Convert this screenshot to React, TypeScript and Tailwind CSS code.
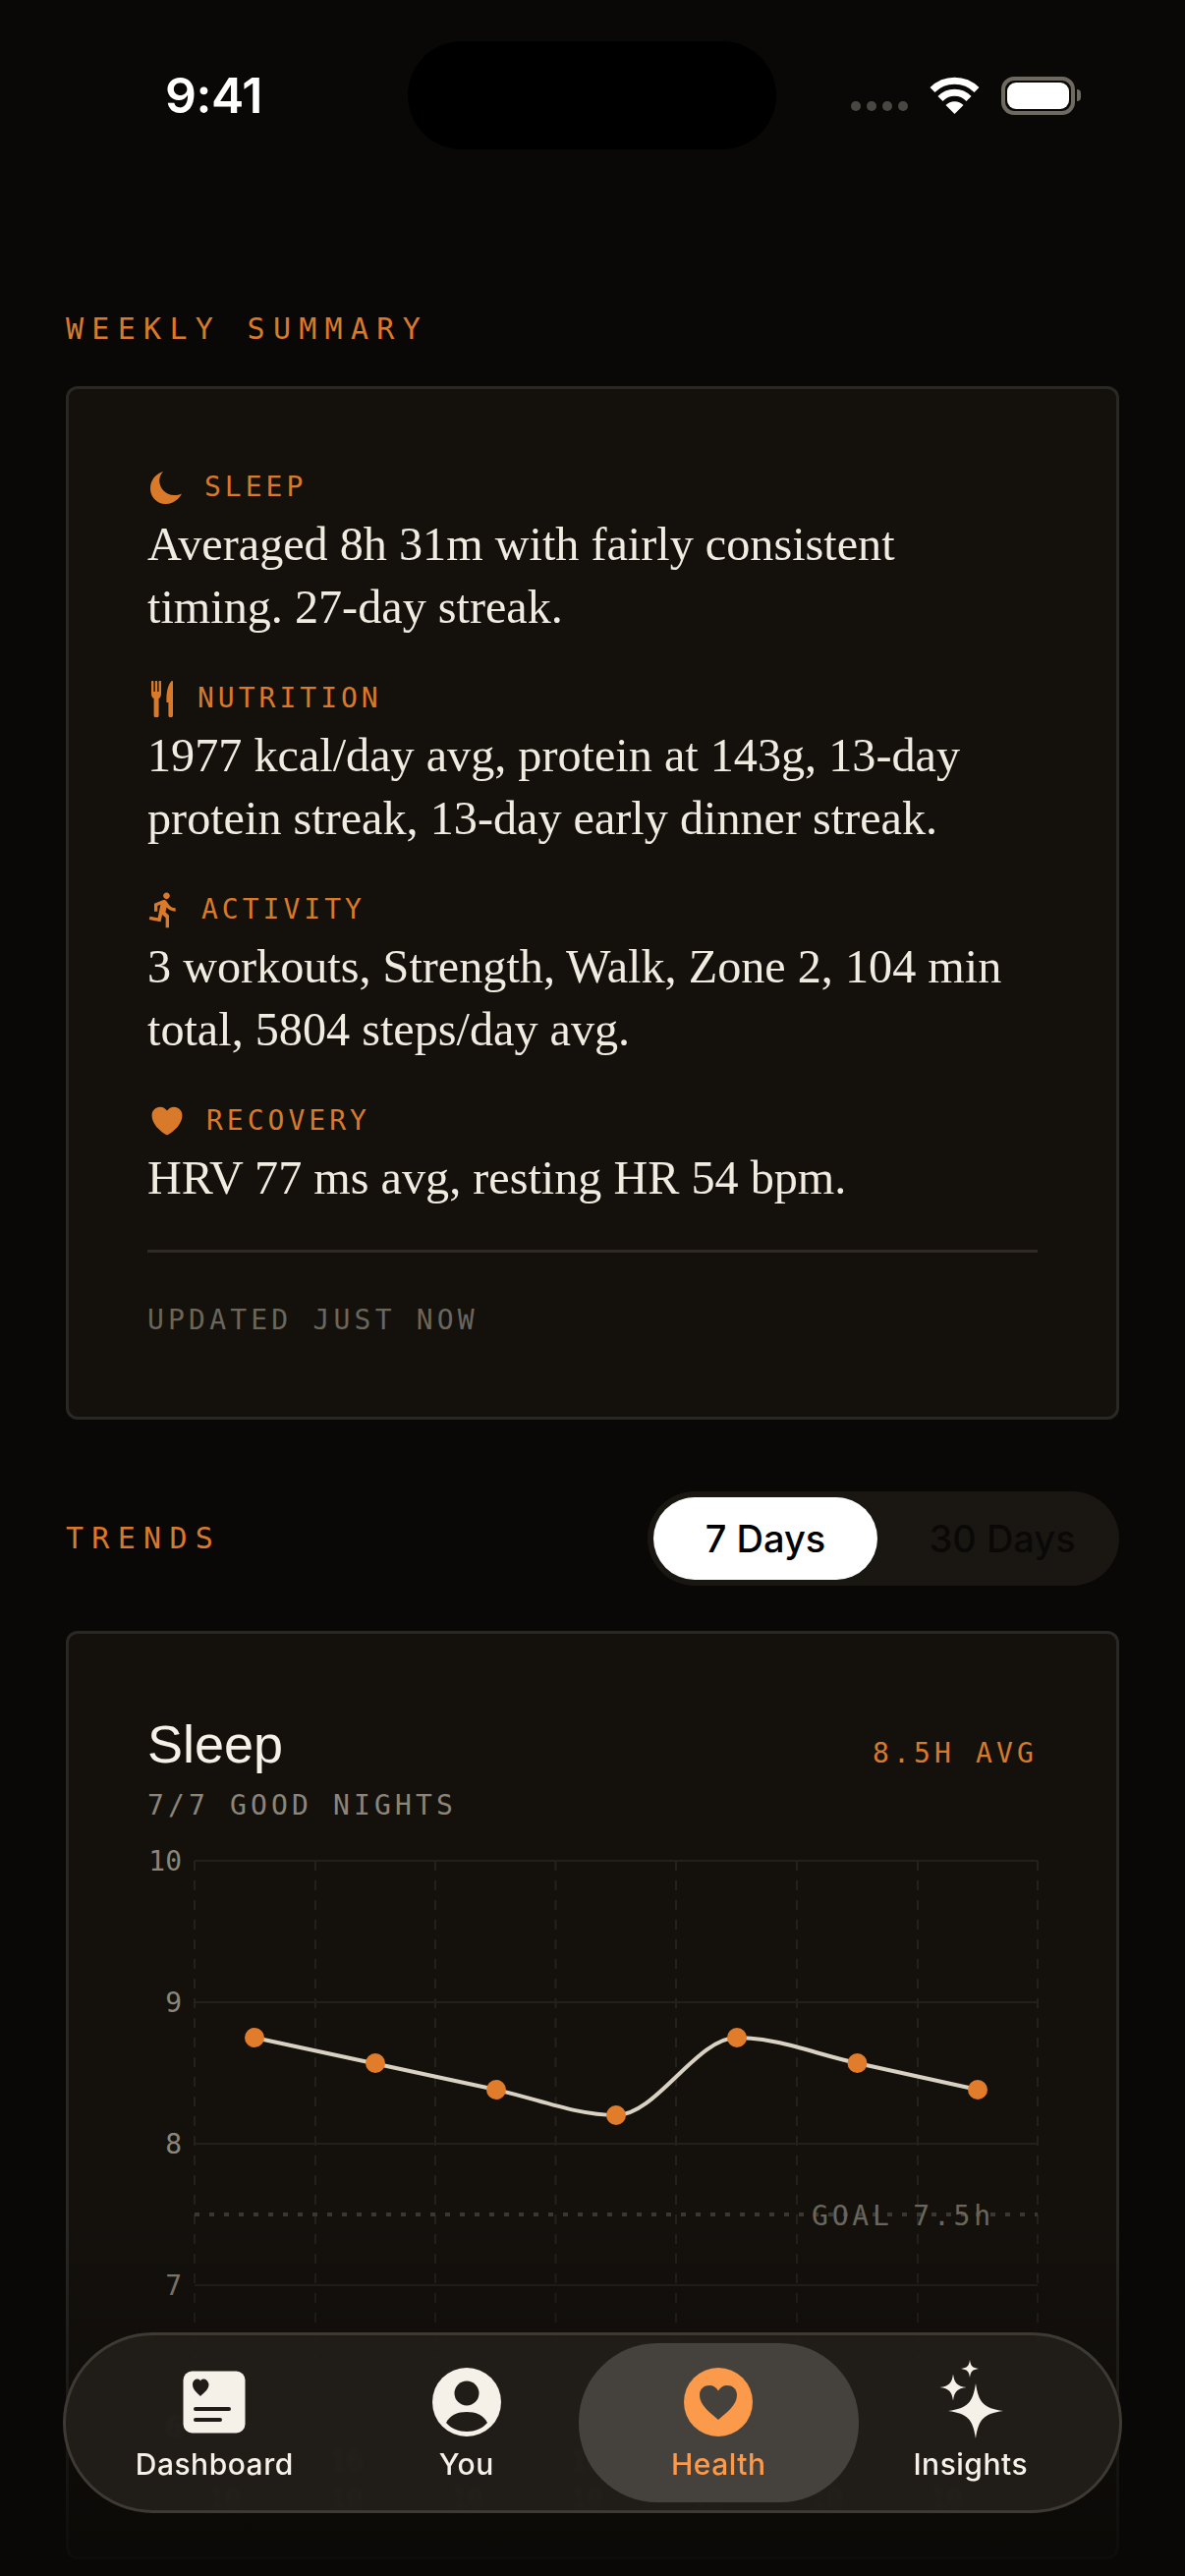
import React from "react";
import { IoHeart } from "react-icons/io5";
import { MdDirectionsRun } from "react-icons/md";

const mono = "font-['DejaVu_Sans_Mono',monospace]";
const sans = "font-['Inter',sans-serif]";
const svgMono = "DejaVu Sans Mono, monospace";

function Wifi() {
  return (
    <svg width="51" height="38" viewBox="0 0 51 38" fill="none">
      <path d="M3 13.5 A32 32 0 0 1 48 13.5" stroke="#fff" strokeWidth="7" />
      <path d="M11 22.5 A20 20 0 0 1 40 22.5" stroke="#fff" strokeWidth="7" />
      <path d="M25.5 38 L16.5 29 A12.5 12.5 0 0 1 34.5 29 Z" fill="#fff" />
    </svg>
  );
}

function Moon() {
  return (
    <svg width="32" height="33" viewBox="0 0 33 33" fill="currentColor" className="ml-[3px]" preserveAspectRatio="none">
      <path d="M13.5 0 C5.5 2 0 9 0 17 C0 26 7 33 16 33 C23 33 29.5 29 33 22.5 C30.5 23.5 28 24 25 24 C16 24 9.5 17 9.5 9 C9.5 6 11 2.5 13.5 0 Z" />
    </svg>
  );
}

function ForkKnife() {
  return (
    <svg width="22" height="37" viewBox="0 0 22 37" fill="currentColor" className="mr-[2px] ml-[4px]">
      <path d="M0 1 a1 1 0 0 1 2.4 0 V11 H3.8 V1 a1 1 0 0 1 2.4 0 V11 H7.6 V1 a1 1 0 0 1 2.4 0 V13 C10 16 8.6 17.5 7.6 18 V35 a2 2 0 0 1 -5 0 V18 C1.4 17.5 0 16 0 13 Z" />
      <path d="M22 0.5 V35 a2.2 2.2 0 0 1 -4.6 0 V22 H15.5 C15 14 16.5 4 20.5 0.3 C21.2 -0.2 22 0 22 0.5 Z" />
    </svg>
  );
}

function StatusBar() {
  return (
    <div className="relative mt-[42px] flex h-[110px] items-center pl-[168px] pr-[106px]">
      <span className={`${sans} w-[247px] shrink-0 text-[50px] leading-none font-semibold tracking-[-0.5px] text-white`}>9:41</span>
      <div className="h-[110px] w-[375px] shrink-0 rounded-[55px] bg-black" />
      <div className="ml-auto flex items-center">
        <div className="mt-[22px] flex gap-[6px]">
          <div className="h-[10px] w-[10px] rounded-full bg-[#4a4743]" />
          <div className="h-[10px] w-[10px] rounded-full bg-[#4a4743]" />
          <div className="h-[10px] w-[10px] rounded-full bg-[#4a4743]" />
          <div className="h-[10px] w-[10px] rounded-full bg-[#4a4743]" />
        </div>
        <div className="ml-[22px]"><Wifi /></div>
        <div className="ml-[22px] flex items-center">
          <div className="h-[39px] w-[75px] rounded-[13px] border-[4px] border-[#6f6a60] p-[2px]">
            <div className="h-full w-full rounded-[9px] bg-white" />
          </div>
          <div className="ml-[2px] h-[12px] w-[4px] rounded-r-full bg-[#6f6a60]" />
        </div>
      </div>
    </div>
  );
}

function Section({ icon, label, lines }: { icon: React.ReactNode; label: string; lines: string[] }) {
  return (
    <div>
      <div className="flex h-[36px] items-center gap-[23px] text-[#d97a2b]">
        {icon}
        <span className={`${mono} text-[28px] leading-[36px] tracking-[4px]`}>{label}</span>
      </div>
      <p className="mt-[8px] font-['Liberation_Serif',serif] text-[48.2px] leading-[64px] text-[#f1ece1]">
        {lines.map((l) => (
          <span key={l} className="block whitespace-nowrap">{l}</span>
        ))}
      </p>
    </div>
  );
}

function Chart() {
  const vx = [48, 171, 293, 415.5, 538, 661, 784, 906];
  const hy = [24, 168, 312, 456, 600];
  const pts: [number, number][] = [
    [109, 204],
    [232, 230],
    [355, 257],
    [477, 283],
    [600, 204],
    [722.5, 230],
    [845, 257],
  ];
  const gx = [78, 202, 325, 447, 570, 691, 813];
  return (
    <svg width="912" height="720" viewBox="0 0 912 720" className="mt-[14px] block" fill="none">
      {vx.map((x) => (
        <line key={x} x1={x} x2={x} y1={24} y2={600} stroke="#24211d" strokeWidth="2" strokeDasharray="10 10" />
      ))}
      {hy.map((y) => (
        <line key={y} x1={48} x2={906} y1={y} y2={y} stroke="#23201c" strokeWidth="2" />
      ))}
      <line x1={48} x2={906} y1={384} y2={384} stroke="#3a3731" strokeWidth="4" strokeDasharray="5 10" />
      {[["10", 24], ["9", 168], ["8", 312], ["7", 456], ["6", 600]].map(([t, y]) => (
        <text key={t} x={35} y={(y as number) + 10} textAnchor="end" fontFamily={svgMono} fontSize="28" fill="#8b857a">
          {t}
        </text>
      ))}
      <text x={676} y={395} fontFamily={svgMono} fontSize="28" letterSpacing="3.8" fill="#6b665c">GOAL 7.5h</text>
      <path
        d="M109 204 L355 257 C396 266 436 283 477 283 C518 283 559 204 600 204 C641 204 681 221 722.5 230 L845 257"
        stroke="#d9d2c3"
        strokeWidth="4"
      />
      {pts.map(([x, y]) => (
        <circle key={x} cx={x} cy={y} r="10" fill="#e07c2a" />
      ))}
      <text x={202} y={645} textAnchor="middle" fontFamily={svgMono} fontSize="28" fill="#8b857a">16</text>
      <text x={447} y={645} textAnchor="middle" fontFamily={svgMono} fontSize="28" fill="#8b857a">18</text>
      {gx.map((x) => (
        <text key={x} x={x} y={683} textAnchor="middle" fontFamily={svgMono} fontSize="28" fill="#8b857a">10</text>
      ))}
    </svg>
  );
}

function DashboardIcon() {
  return (
    <svg width="70" height="70" viewBox="0 0 70 70">
      <rect x="3.5" y="3.5" width="63" height="63" rx="9" fill="#f5f1e8" />
      <path d="M21 29 C17 25 13 22 13 17 C13 13.5 15.5 11.5 18 11.5 C19.5 11.5 20.5 12.3 21 13.5 C21.5 12.3 22.5 11.5 24 11.5 C26.5 11.5 29 13.5 29.5 17 C29.5 22 25 25 21 29 Z" fill="#201d19" />
      <rect x="14" y="40" width="38" height="4" rx="2" fill="#201d19" />
      <rect x="14" y="51" width="29" height="4" rx="2" fill="#201d19" />
    </svg>
  );
}

function YouIcon() {
  return (
    <svg width="70" height="70" viewBox="0 0 70 70">
      <circle cx="35" cy="35" r="35" fill="#f5f1e8" />
      <circle cx="35" cy="26" r="12.5" fill="#201d19" />
      <path d="M14 56 C18 48 26 45 35 45 C44 45 52 48 56 56 C51 62 43 65 35 65 C27 65 19 62 14 56 Z" fill="#201d19" />
    </svg>
  );
}

function HealthIcon() {
  return (
    <svg width="70" height="70" viewBox="0 0 70 70">
      <circle cx="35" cy="35" r="35" fill="#fb9a4a" />
      <path d="M35 53 C27 46 16 38 16 28 C16 21 21 18 26 18 C30 18 33 20 35 23.5 C37 20 40 18 44 18 C49 18 54 21 54 28 C54 38 43 46 35 53 Z" fill="#45423d" />
    </svg>
  );
}

function SparklesIcon() {
  const star = (cx: number, cy: number, r: number) => {
    const k = r * 0.18;
    return `M${cx} ${cy - r} C${cx + k * 0.6} ${cy - k * 1.6} ${cx + k * 1.6} ${cy - k * 0.6} ${cx + r} ${cy} C${cx + k * 1.6} ${cy + k * 0.6} ${cx + k * 0.6} ${cy + k * 1.6} ${cx} ${cy + r} C${cx - k * 0.6} ${cy + k * 1.6} ${cx - k * 1.6} ${cy + k * 0.6} ${cx - r} ${cy} C${cx - k * 1.6} ${cy - k * 0.6} ${cx - k * 0.6} ${cy - k * 1.6} ${cx} ${cy - r} Z`;
  };
  return (
    <svg width="70" height="78" viewBox="0 0 70 78" className="translate-y-[1px] overflow-visible">
      <path d={star(40, 51, 28)} fill="#f5f1e8" />
      <path d={star(17, 27, 13.5)} fill="#f5f1e8" />
      <path d={star(34, 8, 9)} fill="#f5f1e8" />
    </svg>
  );
}

function NavItem({ icon, label, active }: { icon: React.ReactNode; label: string; active?: boolean }) {
  return (
    <div className="relative flex flex-col items-center">
      {active && <div className="absolute -inset-x-[14px] top-[8px] h-[162px] rounded-[80px] bg-[#45423d]" />}
      <div className="relative mt-[33px] flex h-[70px] items-end justify-center">{icon}</div>
      <span className={`${sans} relative mt-[10px] text-[30px] leading-[36px] font-medium tracking-[0.5px] ${active ? "text-[#fb9a4a]" : "text-[#f5f1e8]"}`}>
        {label}
      </span>
    </div>
  );
}

export default function App() {
  return (
    <div className="relative h-[2622px] w-[1206px] overflow-hidden bg-[#0a0806]">
      <StatusBar />
      <main className="px-[67px]">
        <h2 className={`${mono} mt-[165px] text-[30px] leading-[36px] font-normal tracking-[8.3px] text-[#d97a2b]`}>WEEKLY SUMMARY</h2>
        <section className="mt-[40px] h-[1052px] rounded-[12px] border-[3px] border-[#2a2824] bg-[#14110d] px-[80px] pt-[82px]">
          <div className="flex flex-col gap-[43px]">
            <Section icon={<Moon />} label="SLEEP" lines={["Averaged 8h 31m with fairly consistent", "timing. 27-day streak."]} />
            <Section icon={<ForkKnife />} label="NUTRITION" lines={["1977 kcal/day avg, protein at 143g, 13-day", "protein streak, 13-day early dinner streak."]} />
            <Section icon={<MdDirectionsRun className="-mr-[5px] -ml-[3px] h-[40px] w-[40px]" />} label="ACTIVITY" lines={["3 workouts, Strength, Walk, Zone 2, 104 min", "total, 5804 steps/day avg."]} />
            <Section icon={<IoHeart className="-mr-[2px] ml-[1px] h-[38px] w-[38px]" />} label="RECOVERY" lines={["HRV 77 ms avg, resting HR 54 bpm."]} />
          </div>
          <div className="mt-[41px] h-[3px] bg-[#2f2b24]" />
          <p className={`${mono} mt-[51px] text-[28px] leading-[36px] tracking-[4.2px] text-[#6b665c]`}>UPDATED JUST NOW</p>
        </section>

        <div className="mt-[73px] flex h-[96px] items-center justify-between">
          <h2 className={`${mono} text-[30px] leading-[36px] font-normal tracking-[8.3px] text-[#d97a2b]`}>TRENDS</h2>
          <div className={`${sans} flex h-[96px] w-[480px] items-center rounded-full bg-[#1a1713] p-[6px] text-[38px] font-medium`}>
            <div className="flex h-[84px] w-[228px] items-center justify-center rounded-full bg-white text-black">7 Days</div>
            <div className="flex h-[84px] flex-1 items-center justify-center pl-[14px] text-[#0b0907]">30 Days</div>
          </div>
        </div>

        <section className="mt-[46px] h-[945px] rounded-[12px] border-[3px] border-[#2a2824] bg-[#14110d] px-[80px] pt-[82px]">
          <div className="flex items-baseline justify-between">
            <h3 className="font-['Liberation_Sans',sans-serif] text-[54px] leading-[60px] font-normal text-[#f5f1e8]">Sleep</h3>
            <span className={`${mono} text-[28px] leading-[36px] tracking-[4.15px] text-[#d97a2b]`}>8.5H AVG</span>
          </div>
          <p className={`${mono} mt-[15px] text-[28px] leading-[36px] tracking-[4.15px] text-[#8b857a]`}>7/7 GOOD NIGHTS</p>
          <Chart />
        </section>
      </main>

      <div className="pointer-events-none absolute inset-x-0 bottom-0 h-[360px] bg-gradient-to-t from-[#0a0806]/90 to-transparent" />

      <nav className="absolute left-[64px] top-[2374px] grid h-[184px] w-[1078px] grid-cols-4 rounded-[92px] border-[3px] border-[#3e3a33] bg-[#221f1b]/90 px-[23px] backdrop-blur-[2px]">
        <NavItem icon={<DashboardIcon />} label="Dashboard" />
        <NavItem icon={<YouIcon />} label="You" />
        <NavItem icon={<HealthIcon />} label="Health" active />
        <NavItem icon={<SparklesIcon />} label="Insights" />
      </nav>
    </div>
  );
}
